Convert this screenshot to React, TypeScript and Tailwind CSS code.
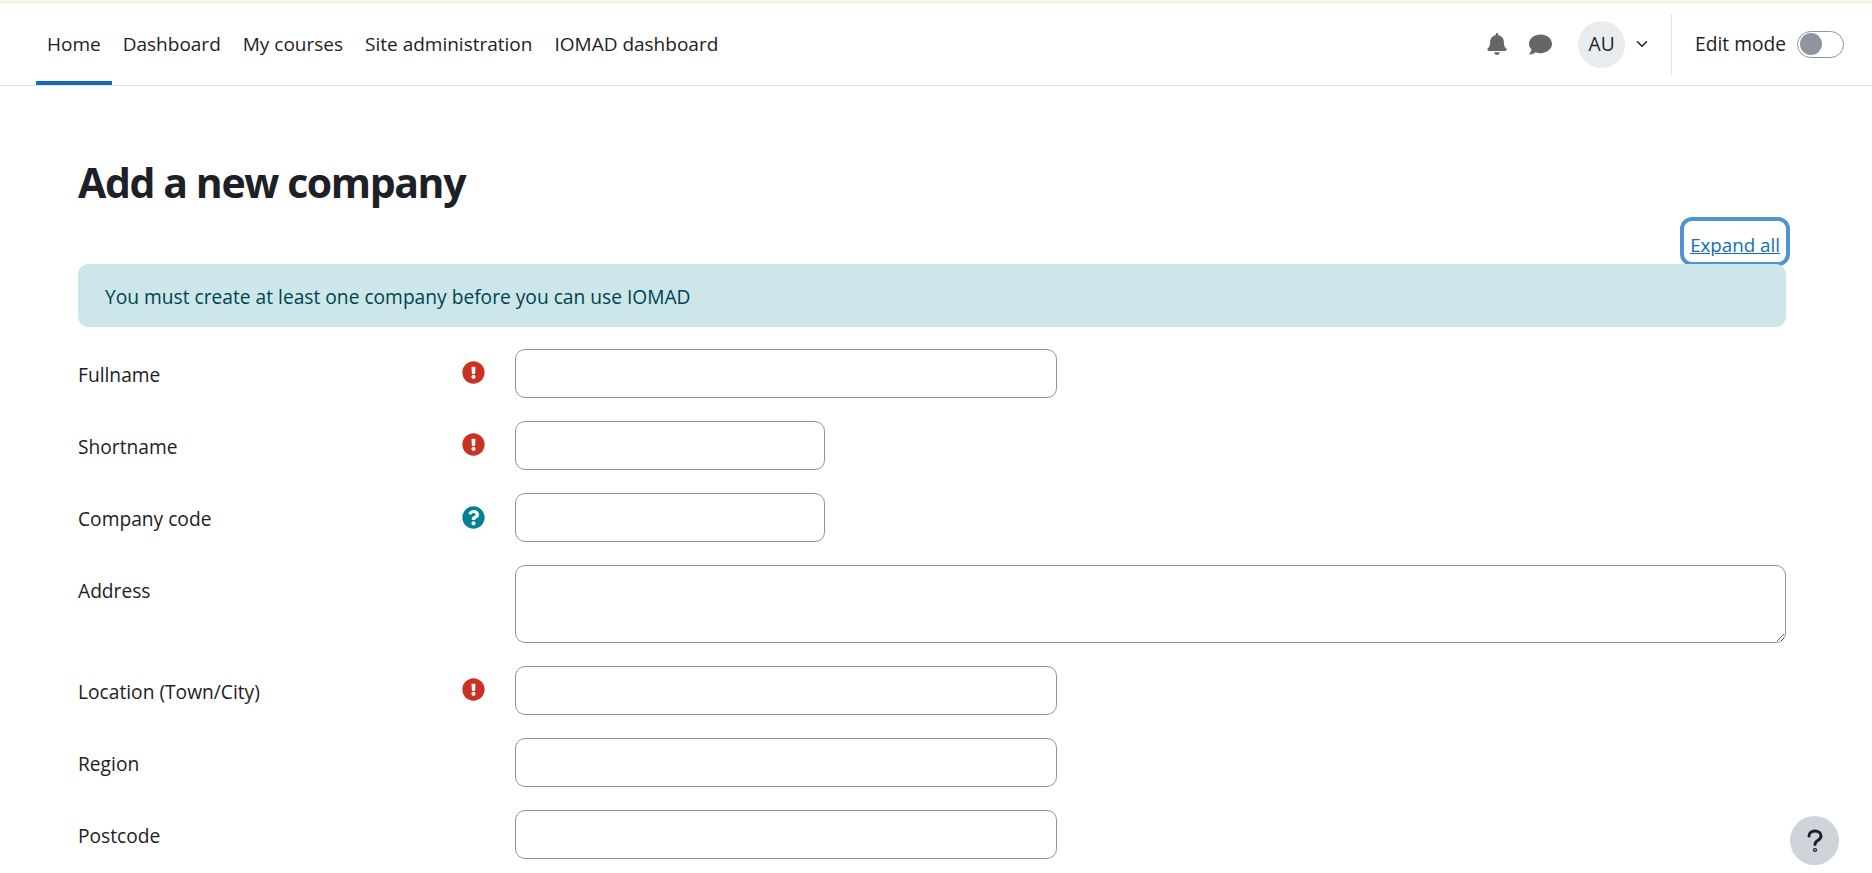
import { ChevronDown } from "lucide-react";
import { FaBell, FaComment, FaExclamationCircle, FaQuestionCircle } from "react-icons/fa";

const navItems = ["Home", "Dashboard", "My courses", "Site administration", "IOMAD dashboard"];

const fields = [
  { label: "Fullname", icon: "required", width: "w-[542px]" },
  { label: "Shortname", icon: "required", width: "w-[310px]" },
  { label: "Company code", icon: "help", width: "w-[310px]" },
  { label: "Address", icon: "", width: "w-full", area: true },
  { label: "Location (Town/City)", icon: "required", width: "w-[542px]" },
  { label: "Region", icon: "", width: "w-[542px]" },
  { label: "Postcode", icon: "", width: "w-[542px]" },
];

function FieldRow({ label, icon, width, area }: { label: string; icon: string; width: string; area?: boolean }) {
  return (
    <div className="flex items-start mb-[23px]">
      <label className="w-[384px] pt-[12px] text-[19.2px] leading-[28px] text-[#1d2125] shrink-0">{label}</label>
      <div className="w-[53px] pt-[12px] shrink-0">
        {icon === "required" && <FaExclamationCircle className="text-[#ca3120] text-[23px]" />}
        {icon === "help" && <FaQuestionCircle className="text-[#008196] text-[23px] mt-[1px]" />}
      </div>
      <div className="flex-1 min-w-0">
        {area ? (
          <textarea className={`${width} block h-[78px] rounded-[10px] border border-[#8f959e] bg-white outline-none`} />
        ) : (
          <input className={`${width} block h-[49px] rounded-[10px] border border-[#8f959e] bg-white outline-none`} />
        )}
      </div>
    </div>
  );
}

export default function App() {
  return (
    <div className="h-screen overflow-hidden bg-white font-['Open_Sans','Noto_Sans',sans-serif] text-[#1d2125]">
      <div className="h-[3px] bg-[#fcf8e8] border-b border-[#f0eddc]" />
      <header className="h-[83px] flex items-stretch border-b border-[#dee2e6] pl-[36px] pr-[28px]">
        <nav className="flex items-stretch">
          {navItems.map((item, i) => (
            <a
              key={item}
              className={`flex items-center px-[11px] pt-[4px] text-[19px] whitespace-nowrap text-[#1d2125] border-b-[4px] ${i === 0 ? "border-[#0f6cbf]" : "border-transparent"}`}
            >
              {item}
            </a>
          ))}
        </nav>
        <div className="ml-auto flex items-center">
          <FaBell className="text-[#666666] text-[22px] mr-[21px]" />
          <FaComment className="text-[#666666] text-[23px] mr-[26px]" />
          <div className="w-[47px] h-[47px] rounded-full bg-[#e9ecef] flex items-center justify-center text-[19.2px]">AU</div>
          <ChevronDown className="ml-[8px] w-[18px] h-[18px] mr-[20px]" strokeWidth={2} />
          <div className="w-px h-[61px] bg-[#dee2e6] mr-[23px]" />
          <span className="text-[19.2px] mr-[11px]">Edit mode</span>
          <div className="w-[47px] h-[27px] rounded-full border border-[#8f959e] p-[2px] flex items-center">
            <div className="w-[22px] h-[22px] rounded-full bg-[#8f959e]" />
          </div>
        </div>
      </header>
      <main className="pl-[78px] pr-[86px]">
        <h1 className="mt-[71px] text-[41px] leading-[50px] font-bold tracking-[-1.4px] text-[#1d2125]">Add a new company</h1>
        <div className="flex justify-end mt-[10px]">
          <a className="-mr-[4px] h-[49px] rounded-[12px] border-[4px] border-[#4f94d2] px-[6px] pt-[11px] text-[18.75px] leading-[26px] text-[#0f6cbf] underline">Expand all</a>
        </div>
        <div className="relative -mt-[2px] h-[63px] rounded-[10px] bg-[#cce6ea] px-[27px] pt-[3px] flex items-center text-[19.2px] text-[#00434e] mb-[22px]">
          You must create at least one company before you can use IOMAD
        </div>
        {fields.map((f) => (
          <FieldRow key={f.label} {...f} />
        ))}
      </main>
      <button className="fixed left-[1790px] top-[816px] w-[49px] h-[49px] rounded-full bg-[#ced4da] flex items-center justify-center">
        <svg width="18" height="24" viewBox="0 0 18 24" fill="none" stroke="#1d2125" strokeWidth="3" strokeLinecap="round">
          <path d="M3 7c0-3 2.600-5 6-5s6 2 6 5c0 2-1.200 3.200-3 4.300-1.900 1.100-3 2.200-3 4.200" />
          <circle cx="9" cy="21" r="0.6" fill="#1d2125" />
        </svg>
      </button>
    </div>
  );
}
